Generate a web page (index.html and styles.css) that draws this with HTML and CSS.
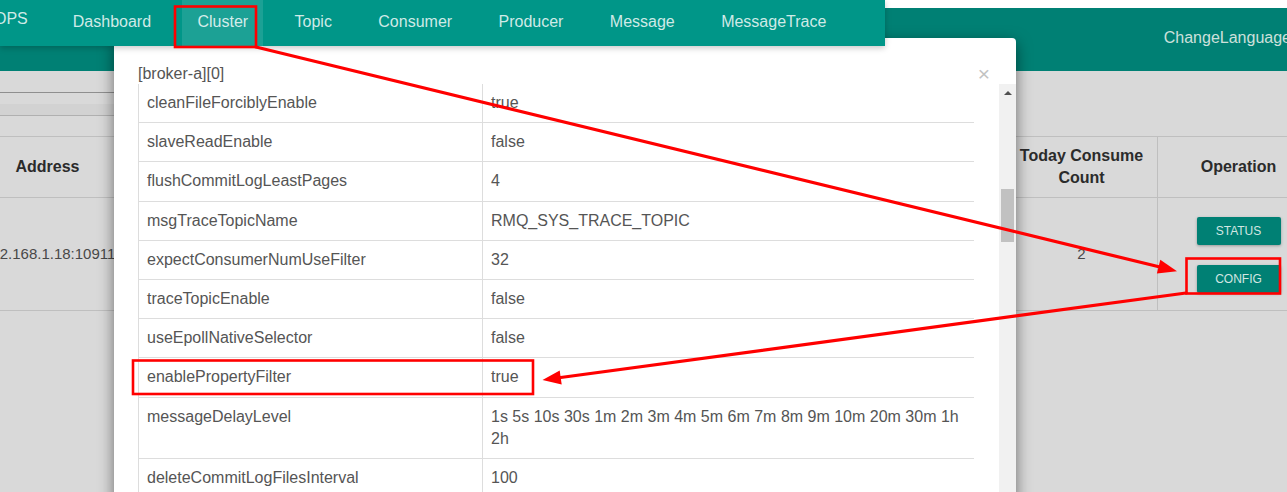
FILE: index.html
```html
<!DOCTYPE html>
<html lang="en">
<head>
<meta charset="utf-8">
<title>Cluster - Broker Config</title>
<link rel="stylesheet" href="styles.css">
</head>
<body>
  <div class="page">
    <div class="strip"></div>
    <header class="hdr"><span class="lang">ChangeLanguage</span></header>
    <div class="toolbar"><div class="filter"></div></div>
    <table class="bg-table">
      <colgroup><col class="c1"><col class="c2"><col class="c3"><col class="c4"></colgroup>
      <thead>
        <tr><th>Address</th><th>Version</th><th>Today Consume Count</th><th>Operation</th></tr>
      </thead>
      <tbody>
        <tr>
          <td class="val addr">192.168.1.18:10911</td>
          <td class="val">V4_7_1</td>
          <td class="val">2</td>
          <td class="ops"><span class="btn">STATUS</span><span class="btn second">CONFIG</span></td>
        </tr>
      </tbody>
    </table>
  </div>

  <nav class="mainnav">
    <span class="brand">OPS</span>
    <ul class="menu">
      <li><a href="#">Dashboard</a></li>
      <li><a href="#" class="active">Cluster</a></li>
      <li><a href="#">Topic</a></li>
      <li><a href="#">Consumer</a></li>
      <li><a href="#">Producer</a></li>
      <li><a href="#">Message</a></li>
      <li><a href="#">MessageTrace</a></li>
    </ul>
  </nav>

  <div class="modal">
    <div class="modal-head">
      <span class="title">[broker-a][0]</span>
      <span class="close">×</span>
    </div>
    <div class="modal-body">
      <div class="tbl-wrap">
        <table class="cfg">
          <colgroup><col class="k"><col class="v"></colgroup>
          <tbody>
            <tr><td>cleanFileForciblyEnable</td><td>true</td></tr>
            <tr><td>slaveReadEnable</td><td>false</td></tr>
            <tr><td>flushCommitLogLeastPages</td><td>4</td></tr>
            <tr><td>msgTraceTopicName</td><td>RMQ_SYS_TRACE_TOPIC</td></tr>
            <tr><td>expectConsumerNumUseFilter</td><td>32</td></tr>
            <tr><td>traceTopicEnable</td><td>false</td></tr>
            <tr><td>useEpollNativeSelector</td><td>false</td></tr>
            <tr><td>enablePropertyFilter</td><td>true</td></tr>
            <tr><td>messageDelayLevel</td><td>1s 5s 10s 30s 1m 2m 3m 4m 5m 6m 7m 8m 9m 10m 20m 30m 1h 2h</td></tr>
            <tr><td>deleteCommitLogFilesInterval</td><td>100</td></tr>
            <tr><td>brokerName</td><td>broker-a</td></tr>
            <tr><td>brokerRole</td><td>ASYNC_MASTER</td></tr>
          </tbody>
        </table>
      </div>
      <div class="sbar">
        <div class="up"></div>
        <div class="thumb"></div>
      </div>
    </div>
  </div>

  <svg class="annot" width="1287" height="492" viewBox="0 0 1287 492">
    <g fill="none" stroke="#ff0000" stroke-width="2.6">
      <rect x="175" y="6.5" width="81" height="40.5"/>
      <rect x="1186.5" y="258.5" width="93.5" height="35"/>
      <rect x="133" y="360.5" width="400" height="33.5"/>
    </g>
    <g stroke="#ff0000" stroke-width="3.2" stroke-linecap="round">
      <line x1="256" y1="47" x2="1162" y2="267.5"/>
      <line x1="1186" y1="293" x2="557" y2="378"/>
    </g>
    <g fill="#ff0000">
      <polygon points="1177,271.2 1160.3,259.8 1156.9,273.4"/>
      <polygon points="542.5,380 559.7,370.6 561.7,384.6"/>
    </g>
  </svg>
</body>
</html>
```

FILE: styles.css
```css
html, body {
  margin: 0;
  padding: 0;
}

body {
  width: 1287px;
  height: 492px;
  overflow: hidden;
  position: relative;
  background: #d9d9d9;
  font-family: "Liberation Sans", Arial, sans-serif;
  font-size: 16px;
}

/* ---------- background page (dimmed by the modal backdrop) ---------- */
.strip {
  height: 8px;
  background: #ffffff;
}

.hdr {
  height: 63px;
  box-sizing: border-box;
  padding-bottom: 4px;
  background: #008074;
  display: flex;
  align-items: center;
  justify-content: flex-end;
}

.lang {
  color: #cde0dc;
  font-size: 16px;
  margin-right: -4px;
}

.toolbar {
  height: 65px;
  box-sizing: border-box;
  padding-top: 21px;
}

.filter {
  width: 300px;
  height: 22px;
  border-top: 1px solid #8f8f8f;
  border-bottom: 1px solid #b0b0b0;
  background: linear-gradient(#d9d9d9 0, #d9d9d9 50%, #d2d2d2 50%, #d2d2d2 100%);
}

.bg-table {
  margin-left: -20px;
  width: 1339px;
  border-collapse: collapse;
  table-layout: fixed;
}

.bg-table .c1 { width: 134px; }
.bg-table .c2 { width: 891px; }
.bg-table .c3 { width: 152px; }
.bg-table .c4 { width: 162px; }

.bg-table th {
  border: 1px solid #bfbfbf;
  padding: 8px;
  line-height: 22px;
  font-size: 16px;
  font-weight: bold;
  color: #2b2b2b;
  text-align: center;
  vertical-align: middle;
}

.bg-table td {
  border: 1px solid #bfbfbf;
  padding: 8px;
  line-height: 22px;
  font-size: 15px;
  text-align: center;
  vertical-align: middle;
  color: #484848;
  white-space: nowrap;
  overflow: hidden;
}

.bg-table td.val {
  overflow: visible;
}

.bg-table td.addr {
  padding-left: 2px;
}

.bg-table td.ops {
  padding: 19px 8px 17px;
}

.btn {
  display: block;
  width: 84px;
  height: 28px;
  margin: 0 auto;
  line-height: 28px;
  border-radius: 2px;
  background: #008074;
  color: #d2e6e2;
  font-size: 12px;
  text-align: center;
  box-shadow: 0 1px 3px rgba(0, 0, 0, 0.3);
}

.btn.second {
  margin-top: 20px;
}

/* ---------- floating navigation ---------- */
.mainnav {
  position: absolute;
  top: 0;
  left: 0;
  z-index: 3;
  width: 885px;
  height: 46px;
  background: #009688;
  box-shadow: 0 2px 6px rgba(0, 0, 0, 0.22);
  display: flex;
  align-items: flex-start;
}

.brand {
  margin-left: -6px;
  margin-right: 30px;
  line-height: 38px;
  color: rgba(255, 255, 255, 0.82);
}

.menu {
  display: flex;
  gap: 16.4px;
  list-style: none;
  margin: 0;
  padding: 0;
}

.menu a {
  display: block;
  height: 46px;
  box-sizing: border-box;
  padding: 0 15px;
  line-height: 43px;
  color: rgba(255, 255, 255, 0.82);
  text-decoration: none;
}

.menu a.active {
  background: rgba(255, 255, 255, 0.11);
}

/* ---------- modal ---------- */
.modal {
  position: absolute;
  left: 114px;
  top: 38px;
  z-index: 2;
  width: 902px;
  height: 480px;
  background: #ffffff;
  border-radius: 4px;
  box-shadow: 0 5px 15px rgba(0, 0, 0, 0.5);
}

.modal-head {
  display: flex;
  justify-content: space-between;
  align-items: center;
  padding: 25px 26px 0 24px;
  height: 21px;
}

.title {
  line-height: 22px;
  color: #555555;
}

.close {
  font-size: 21px;
  line-height: 22px;
  color: #c2c2c2;
}

.modal-body {
  display: flex;
  height: 420px;
}

.tbl-wrap {
  width: 836px;
  margin: 0 25px 0 24px;
  overflow: hidden;
}

.cfg {
  width: 836px;
  border-collapse: collapse;
  table-layout: fixed;
}

.cfg .k { width: 344px; }
.cfg .v { width: 492px; }

.cfg td {
  border: 1px solid #dddddd;
  padding: 8px;
  line-height: 22.2px;
  color: #555555;
  vertical-align: top;
}

.cfg tr:first-child td {
  border-top: none;
}

.sbar {
  width: 17px;
  background: #f1f1f1;
  display: flex;
  flex-direction: column;
  align-items: center;
}

.up {
  height: 17px;
  width: 17px;
  display: flex;
  align-items: center;
  justify-content: center;
}

.up::before {
  content: "";
  border-left: 4px solid transparent;
  border-right: 4px solid transparent;
  border-bottom: 4px solid #505050;
}

.thumb {
  margin-top: 88px;
  width: 13px;
  height: 53px;
  background: #c1c1c1;
}

/* ---------- annotations ---------- */
.annot {
  position: absolute;
  top: 0;
  left: 0;
  z-index: 5;
  pointer-events: none;
}
```
